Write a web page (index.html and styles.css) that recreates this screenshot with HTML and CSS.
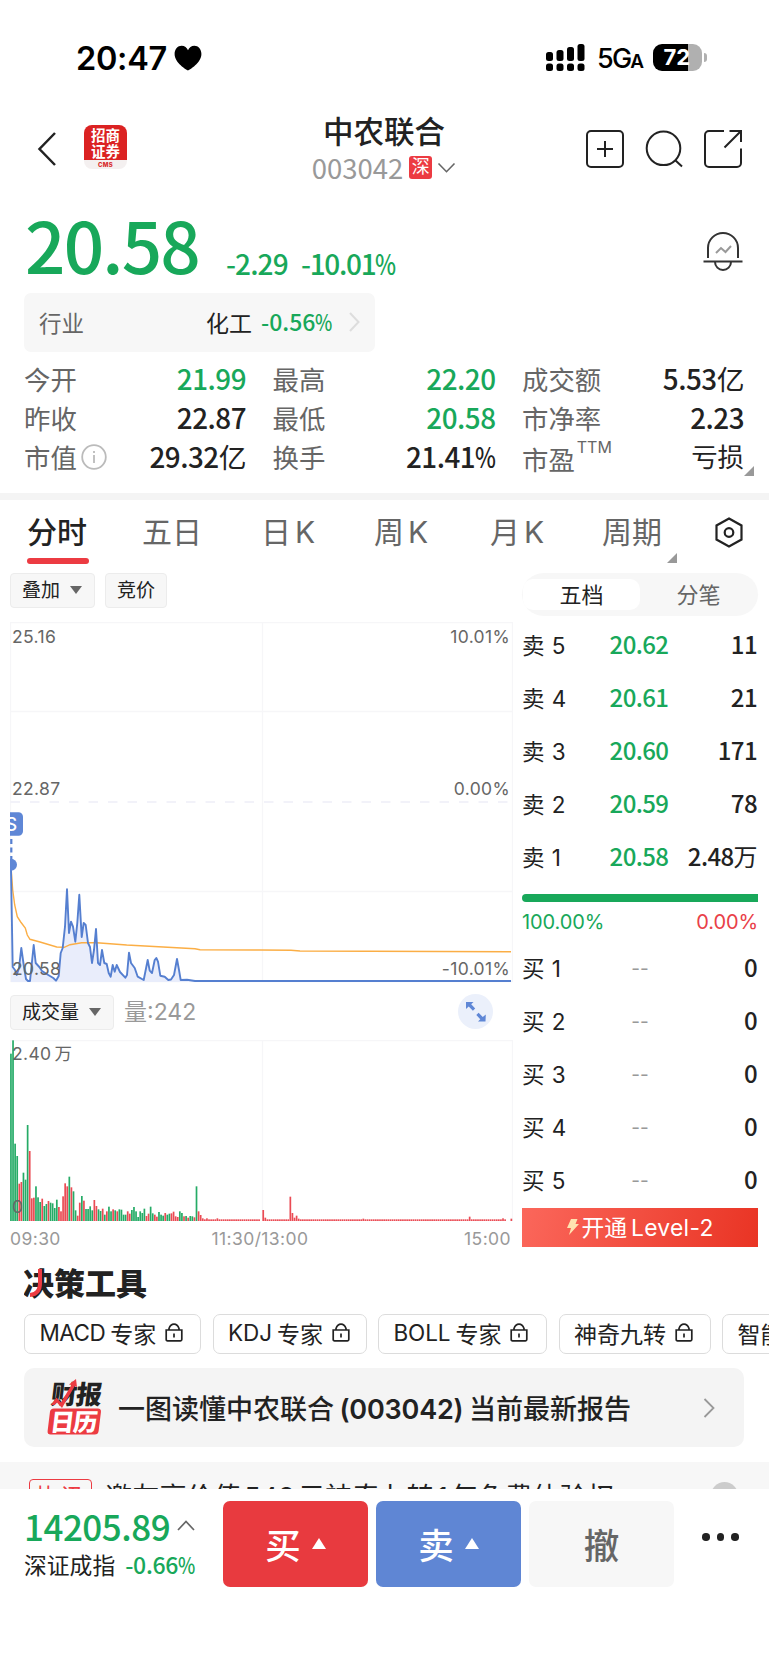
FILE: index.html
```html
<!DOCTYPE html>
<html lang="zh-CN">
<head>
<meta charset="utf-8">
<title>中农联合 003042</title>
<link rel="stylesheet" href="styles.css">
</head>
<body>
<div class="app">
  <div class="status">
    <span class="clock">20:47</span>
    <svg class="heart" width="28" height="26" viewBox="0 0 28 26"><path d="M14 25.5C12.5 24.8 .6 18 .6 9 .6 4.300 3.800.800 7.600.800 10.600.800 13 2.800 14 5.300 15 2.800 17.400.800 20.400.800 24.200.800 27.400 4.300 27.400 9 27.400 18 15.500 24.800 14 25.500Z"/></svg>
    <svg class="signal" width="39" height="28" viewBox="0 0 39 28"><rect x="0" y="8" width="7" height="9" rx="2.500"/><rect x="10.500" y="6" width="7" height="11" rx="2.500"/><rect x="21" y="3" width="7" height="14" rx="2.500"/><rect x="31.500" y="0" width="7" height="17" rx="2.500"/><rect x="0" y="19.500" width="7" height="7.500" rx="2.500"/><rect x="10.500" y="19.500" width="7" height="7.500" rx="2.500"/><rect x="21" y="19.500" width="7" height="7.500" rx="2.500"/><rect x="31.500" y="19.500" width="7" height="7.500" rx="2.500"/></svg>
    <span class="net">5G<small>A</small></span>
    <span class="battery">72</span><span class="battery-tip"></span>
  </div>

  <div class="nav">
    <svg class="back" width="20" height="36" viewBox="0 0 20 36"><path d="M18 2 2.500 18 18 34"/></svg>
    <div class="broker"><span>招商</span><span>证券</span><em>CMS</em></div>
    <div class="name">
      <div class="title">中农联合</div>
      <div class="code"><span class="num">003042</span><b>深</b><svg width="19" height="12" viewBox="0 0 19 12"><path d="M1.500 1.500 9.500 9.700 17.500 1.500"/></svg></div>
    </div>
    <div class="actions">
      <svg width="38" height="38" viewBox="0 0 38 38"><rect x="1" y="1" width="36" height="36" rx="4"/><path d="M19 11v16M11 19h16"/></svg>
      <svg width="38" height="38" viewBox="0 0 38 38"><circle cx="18.500" cy="18.300" r="16.800"/><path d="m30 30 7 6.500"/></svg>
      <svg width="38" height="38" viewBox="0 0 38 38"><path d="M20 1H5a4 4 0 0 0-4 4v28a4 4 0 0 0 4 4h28a4 4 0 0 0 4-4V18.500M25.500 1H37v11M37 1 20.500 17.500"/></svg>
    </div>
  </div>

  <div class="quote">
    <span class="price num">20.58</span>
    <span class="chg num">-2.29</span>
    <span class="chg pct num">-10.01<small>%</small></span>
    <svg class="bell" width="40" height="42" viewBox="0 0 40 42"><path d="M5 27V17a15 15 0 0 1 30 0v10M.500 30.500h39M12 31a8 8 0 0 0 16 0"/><path class="zig" d="m13 22 5-5 4.500 4 5.500-6"/></svg>
  </div>
  <div class="industry">
    <span class="gray">行业</span><span class="ind-name">化工</span><span class="num ind-pct">-0.56<small>%</small></span>
    <svg width="11" height="20" viewBox="0 0 11 20"><path d="m1 1 8.500 9L1 19"/></svg>
  </div>
  <div class="stats">
    <div><label>今开</label><i class="num g">21.99</i></div><div><label>最高</label><i class="num g">22.20</i></div><div><label>成交额</label><i class="num">5.53<u>亿</u></i></div>
    <div><label>昨收</label><i class="num">22.87</i></div><div><label>最低</label><i class="num g">20.58</i></div><div><label>市净率</label><i class="num">2.23</i></div>
    <div><label>市值</label><svg class="info" width="26" height="26" viewBox="0 0 26 26"><circle cx="13" cy="13" r="11.800"/><path d="M13 11v8M13 7v2"/></svg><i class="num">29.32<u>亿</u></i></div><div><label>换手</label><i class="num">21.41<small>%</small></i></div><div class="last"><label class="low">市盈</label><sup>TTM</sup><i class="zh">亏损</i></div>
  </div>
  <div class="band"></div>

  <div class="tabs">
    <span class="on">分时</span><span>五日</span><span>日<u>K</u></span><span>周<u>K</u></span><span>月<u>K</u></span><span class="more">周期</span>
    <svg width="28" height="31" viewBox="0 0 28 31"><path d="M14 1.500 26.500 8.500v14L14 29.500 1.500 22.500v-14Z"/><circle cx="14" cy="15.500" r="4.300"/></svg>
  </div>

  <div class="main">
    <div class="left">
      <div class="tools"><span class="btn">叠加<s></s></span><span class="btn">竞价</span></div>
      <div class="chart price-chart">
        <svg width="503" height="361" viewBox="10 622 503 361">
          <path class="grid" d="M10.500 982V622.500H512.500V982M10.500 711.500h502M10.500 891.500h502M262.500 622.500V982M10.500 981.500h502"/>
          <path class="mid" d="M10.500 802h502"/>
          <path class="area" d=""/>
          <path class="avg" d="M11.300 871 12.700 890 14.700 905 17.300 916.700 20.700 922 25.300 928 27.300 935 30 939.300 40 942 56.700 947 64.300 947.300 70 944.700 81.700 942.700 96.700 942.700 126.700 945 195 948.700 200 949.700 260 950 291 950.300 300 951 511 951.700"/>
          <path class="line" d=""/>
          <path class="buy-dash" d="M11.300 839v28"/>
          <circle class="dot" cx="11" cy="864.800" r="6"/>
          <path class="flag" d="M10 812.300h8.500a4.500 4.500 0 0 1 4.500 4.500v14.500a4.500 4.500 0 0 1-4.500 4.500H10Z"/>
          <text class="flag-s" x="5.500" y="831">S</text>
        </svg>
        <span class="tl">25.16</span><span class="tr">10.01%</span><span class="ml">22.87</span><span class="mr">0.00%</span><span class="bl">20.58</span><span class="br">-10.01%</span>
      </div>
      <div class="tools vol"><span class="btn">成交量<s></s></span><span class="volume">量:242</span>
        <svg class="expand" width="35" height="35" viewBox="0 0 35 35"><circle cx="17.500" cy="17.500" r="17.500"/><path d="M8 8h7.500l-2.300 2.300 4 4.100-2.300 2.300-4.200-4.100L8 15ZM27.500 27.500H20l2.300-2.300-4-4.100 2.300-2.300 4.200 4.100 3-2.500Z"/></svg>
      </div>
      <div class="chart vol-chart">
        <svg width="503" height="181" viewBox="10 1040 503 181"><path class="grid" d="M10.500 1221V1040.500H512.500V1221M262.500 1040.500V1221"/><g class="bars"></g></svg>
        <span class="tl">2.40<q>万</q></span><span class="zero">0</span>
      </div>
      <div class="axis"><span>09:30</span><span>11:30/13:00</span><span>15:00</span></div>
    </div>

    <div class="book">
      <div class="seg"><span class="on">五档</span><span>分笔</span></div>
      <div class="rows">
        <div><span>卖 5</span><b>20.62</b><em>11</em></div>
        <div><span>卖 4</span><b>20.61</b><em>21</em></div>
        <div><span>卖 3</span><b>20.60</b><em>171</em></div>
        <div><span>卖 2</span><b>20.59</b><em>78</em></div>
        <div><span>卖 1</span><b>20.58</b><em>2.48<u>万</u></em></div>
      </div>
      <div class="ratio"></div>
      <div class="ratio-text"><span class="g">100.00%</span><span class="r">0.00%</span></div>
      <div class="rows">
        <div><span>买 1</span><i>--</i><em>0</em></div>
        <div><span>买 2</span><i>--</i><em>0</em></div>
        <div><span>买 3</span><i>--</i><em>0</em></div>
        <div><span>买 4</span><i>--</i><em>0</em></div>
        <div><span>买 5</span><i>--</i><em>0</em></div>
      </div>
      <div class="level"><svg width="14" height="18" viewBox="0 0 14 18"><path d="M5 1h6.500L9.500 6H13L3 17l2-7H1Z"/></svg><span>开通<q>Level-2</q></span></div>
    </div>
  </div>

  <div class="heading"><svg width="130" height="40" viewBox="0 0 130 40"><text class="h-text" x="-1" y="31.500" textLength="124">决策工具</text><path class="h-mark" d="M14 6h4v14c0 8-3.500 13.300-12 14v-4c5.500-.700 8-4 8-10.200Z"/></svg></div>
  <div class="chips">
    <span class="c1"><q>MACD</q>专家<svg viewBox="0 0 18 19"><path d="M1.200 7h15.600v9.500q0 1.300-1.300 1.300H2.500q-1.300 0-1.300-1.300ZM4 7V5.500Q5.500 1.200 9 1.200T14 5.500V7M9 10.500v4"/></svg></span>
    <span class="c2"><q>KDJ</q>专家<svg viewBox="0 0 18 19"><path d="M1.200 7h15.600v9.500q0 1.300-1.300 1.300H2.500q-1.300 0-1.300-1.300ZM4 7V5.500Q5.500 1.200 9 1.200T14 5.500V7M9 10.500v4"/></svg></span>
    <span class="c3"><q>BOLL</q>专家<svg viewBox="0 0 18 19"><path d="M1.200 7h15.600v9.500q0 1.300-1.300 1.300H2.500q-1.300 0-1.300-1.300ZM4 7V5.500Q5.500 1.200 9 1.200T14 5.500V7M9 10.500v4"/></svg></span>
    <span class="c4">神奇九转<svg viewBox="0 0 18 19"><path d="M1.200 7h15.600v9.500q0 1.300-1.300 1.300H2.500q-1.300 0-1.300-1.300ZM4 7V5.500Q5.500 1.200 9 1.200T14 5.500V7M9 10.500v4"/></svg></span>
    <span class="c5">智能</span>
  </div>
  <div class="report">
    <svg class="rlogo" width="58" height="58" viewBox="0 0 58 58"><g transform="skewX(-7)"><text class="rl-a" x="6" y="24.500" textLength="51">财报</text><rect x="7" y="29.500" width="51" height="26" rx="3.500"/><text class="rl-b" x="9" y="52" textLength="47">日历</text></g><path d="m4 26 5.500-7.500 4.500 5L24.500 6 22 5.500 29 0l1 8-2.300-.700L15 29l-5-5.500L7.500 26Z"/></svg>
    <span>一图读懂中农联合<q>(003042)</q>当前最新报告</span>
    <svg class="rarrow" width="12" height="20" viewBox="0 0 12 20"><path d="m1.500 1 9 9-9 9"/></svg>
  </div>
  <div class="ticker"><b>热讯</b><span>邀友享价值<q>548</q>元神奇九转<q>1</q>年免费体验权</span><i></i></div>

  <div class="bottom">
    <div class="index">
      <div class="ix-top"><span class="num">14205.89</span><svg width="18" height="11" viewBox="0 0 18 11"><path d="m1 10 8-8.500L17 10"/></svg></div>
      <div class="ix-sub"><span>深证成指</span><span class="num g">-0.66<small>%</small></span></div>
    </div>
    <div class="trade buy">买<s></s></div>
    <div class="trade sell">卖<s></s></div>
    <div class="trade undo">撤</div>
    <div class="dots"><i></i><i></i><i></i></div>
  </div>
</div>
<script src="chart.js"></script>
</body>
</html>
```
FILE: styles.css
```css
* { box-sizing: border-box; }
body { margin: 0; background: #fff; color: #222; font-family: Inter, "Noto Sans CJK SC", sans-serif; font-size: 22px; }
svg { display: block; flex: none; fill: none; }
i, em { font-style: normal; }
s, u { text-decoration: none; }
q { quotes: none; }
.app { width: 769px; height: 1665px; overflow: hidden; display: flex; flex-direction: column; }
.app > div { flex: none; white-space: nowrap; }
.num { font-family: "Noto Sans CJK SC", sans-serif; font-weight: 500; }
.num small { display: inline-block; font-size: 1em; transform: scaleX(.8); transform-origin: left; margin-right: -.19em; }
.num u, .rows em u { font-weight: 400; }
.g { color: #18a85a; }
.r { color: #e94048; }

.status { height: 115px; padding: 0 62px 0 76px; display: flex; align-items: center; color: #000; }
.clock { font-size: 32.500px; font-weight: 600; width: 99px; letter-spacing: -.3px; padding-top: 1px; }
.heart { fill: #000; }
.signal { margin-left: 344px; fill: #000; }
.net { font-size: 27px; font-weight: 500; margin-left: 12px; width: 57px; letter-spacing: -1.800px; position: relative; top: 1px; }
.net small { font-size: 19px; font-weight: 600; }
.battery { width: 49px; height: 27px; border-radius: 9px; background: linear-gradient(90deg, #000 72%, #b0b0b0 72%); color: #fff; font-size: 22px; font-weight: 700; line-height: 27px; text-align: center; padding-right: 2px; }
.battery-tip { width: 3px; height: 9px; margin-left: 2px; border-radius: 0 3px 3px 0; background: #b0b0b0; }

.nav { height: 75px; padding: 0 27px 0 37px; display: flex; }
.back { margin-top: 15.500px; stroke: #222; stroke-width: 2.500; }
.broker { margin: 10px 0 0 27px; width: 43px; height: 44px; border-radius: 8px; background: linear-gradient(#db2222 0 35px, #f4f0f0 35px); color: #fff; font: 700 14.500px/16px "Noto Sans CJK SC", sans-serif; display: flex; flex-direction: column; align-items: center; padding-top: 2px; }
.broker em { color: #d82b2b; font: 800 6px/8px Inter, sans-serif; margin-top: 2px; letter-spacing: .3px; }
.name { margin-left: 171px; width: 172px; height: 75px; display: flex; flex-direction: column; align-items: center; }
.title { font-size: 30.500px; line-height: 34px; font-weight: 500; }
.code { display: flex; align-items: center; height: 38px; color: #999; }
.code .num { font-size: 27.500px; line-height: 34px; font-weight: 400; padding-bottom: 3px; }
.code b { width: 23px; height: 23px; margin: -1px 5px 0 6px; border-radius: 3px; background: #ec3b42; color: #fff; font-weight: 400; font-size: 18px; line-height: 22px; text-align: center; }
.code svg { stroke: #666; stroke-width: 1.600; }
.actions { margin: 14.500px 0 0 116px; display: flex; gap: 21px; }
.actions svg { stroke: #222; stroke-width: 2; }

.quote { height: 103px; padding: 0 0 0 25px; display: flex; align-items: flex-start; color: #18a85a; }
.price { font-size: 71px; line-height: 104px; width: 201px; letter-spacing: -1.800px; margin-top: 1px; }
.chg { font-size: 28px; line-height: 40px; margin-top: 53px; width: 75px; letter-spacing: -.900px; }
.chg.pct { width: 402px; letter-spacing: -1.300px; }
.bell { margin-top: 40.500px; stroke: #333; stroke-width: 2; }
.bell .zig { stroke: #999; }

.industry { margin-left: 24px; width: 351px; height: 59px; padding: 0 15px 2px; background: #f7f7f7; border-radius: 7px; display: flex; align-items: center; }
.gray { color: #666; font-size: 22.500px; width: 167px; }
.ind-name { font-size: 23px; width: 55px; }
.ind-pct { color: #18a85a; font-size: 23px; line-height: 50px; width: 88px; padding-bottom: 1px; }
.industry svg { stroke: #ddd; stroke-width: 2; }

.stats { padding: 7px 25px 0 24px; height: 141px; display: grid; grid-template-columns: 222px 223px 222px; column-gap: 26.500px; grid-auto-rows: 39px; }
.stats > div { display: flex; align-items: center; position: relative; }
.stats label { font-size: 26.400px; color: #666; }
.stats i { margin-left: auto; font-size: 27.800px; line-height: 36px; padding-bottom: 2px; letter-spacing: -.500px; }
.stats .zh { font-size: 26.400px; letter-spacing: 0; padding: 0; }
.stats .low { position: relative; top: 2px; }
.stats sup { font-size: 16px; color: #666; align-self: flex-start; margin: 0 0 0 2px; line-height: 20px; }
.info { margin-left: 4px; stroke: #bbb; stroke-width: 1.800; }
.last::after { content: ""; position: absolute; right: -10px; bottom: 0; border: 5px solid; border-color: transparent #999 #999 transparent; }
.band { height: 7px; background: #f4f4f4; }

.tabs { height: 73px; padding: 0 0 0 27px; display: flex; align-items: flex-start; color: #666; font-size: 30px; line-height: 64px; }
.tabs span { position: relative; width: 115px; }
.tabs span:nth-child(2) { width: 119px; }
.tabs span:nth-child(3) { width: 113px; }
.tabs span:nth-child(4) { width: 116px; }
.tabs span:nth-child(5) { width: 112px; }
.tabs u { margin-left: 4px; }
.tabs .on { color: #222; font-weight: 500; }
.tabs .on::after { content: ""; position: absolute; left: 0; top: 57.500px; width: 62px; height: 6px; border-radius: 3px; background: #ec3b42; }
.tabs .more::after { content: ""; position: absolute; left: 65px; top: 53px; border: 5px solid; border-color: transparent #999 #999 transparent; }
.tabs svg { margin-top: 17px; stroke: #222; stroke-width: 2.200; margin-left: -2px; }

.main { height: 675px; display: flex; padding-left: 10px; }
.left { width: 503px; }
.tools { height: 49px; display: flex; gap: 10px; align-items: flex-start; }
.btn { height: 34.500px; border: 1px solid #ececec; border-radius: 4px; background: #f7f7f7; padding: 0 11px; font-size: 19px; line-height: 33px; display: flex; align-items: center; }
.btn s { margin: 0 1px 0 10px; border: 6px solid transparent; border-top: 8px solid #666; border-bottom: 0; }
.chart { position: relative; font-size: 17.500px; line-height: 20px; color: #666; letter-spacing: .35px; }
.chart span { position: absolute; }
.tl { left: 2px; top: 4px; }
.price-chart .tl, .tr { top: 4.500px; }
.tr { right: 3px; }
.ml { left: 2px; top: 157px; }
.mr { right: 3px; top: 157px; }
.bl { left: 2px; top: 337px; }
.br { right: 3px; top: 337px; }
.zero { left: 2px; bottom: 4px; }
.tl q { margin-left: 3px; }
.grid { stroke: #f6f6f8; stroke-width: 1.300; }
.mid { stroke: #eeeef8; stroke-width: 1.700; stroke-dasharray: 9.500 10; }
.area { fill: #e9edfb; }
.line { stroke: #557fd0; stroke-width: 1.900; stroke-linejoin: round; }
.avg { stroke: #fbae45; stroke-width: 1.400; }
.buy-dash { stroke: #557fd0; stroke-width: 2.200; stroke-dasharray: 5 3.500; }
.dot, .flag { fill: #5f87d6; }
.flag-s { fill: #fff; font-size: 18px; font-weight: 500; }
.tools.vol { height: 57px; padding-top: 12px; }
.volume { color: #999; font-size: 23px; line-height: 34px; font-weight: 400; }
.expand { margin: -1px 20px 0 auto; }
.expand circle { fill: #ebf0fb; }
.expand path { fill: #5f87d6; }
.axis { display: flex; justify-content: space-between; padding: 8px 2px 0 0; font-size: 17.500px; line-height: 20px; color: #999; letter-spacing: .4px; }
.axis span:nth-child(2) { margin-right: 5px; }

.book { width: 236px; margin-left: 9px; }
.seg { height: 43px; border-radius: 22px; background: #f7f7f7; display: flex; padding: 6px 1px; font-size: 22px; line-height: 32px; color: #666; text-align: center; }
.seg span { width: 117px; height: 31px; }
.seg .on { background: #fff; color: #222; border-radius: 10px; }
.rows > div { height: 53px; display: flex; align-items: center; line-height: 53px; }
.rows span { width: 77px; font-size: 22.500px; word-spacing: 1px; padding-top: 1px; }
.rows b, .rows em { font: 500 24px/48px "Noto Sans CJK SC", sans-serif; letter-spacing: -.600px; padding-bottom: 2px; }
.rows b { color: #18a85a; width: 68px; text-align: center; margin-left: 6px; }
.rows i { width: 68px; margin-left: 7px; text-align: center; color: #999; font-size: 19px; padding-top: 1px; }
.rows em { margin-left: auto; margin-right: 1px; }
.seg + .rows { padding-top: 2px; }
.ratio { height: 8px; margin-top: 11px; border-radius: 4px 0 0 4px; background: #18a85a; }
.ratio-text { display: flex; justify-content: space-between; font-size: 20px; line-height: 40px; height: 39px; letter-spacing: -.1px; }
.level { height: 39px; margin-top: 2px; padding-bottom: 2px; background: linear-gradient(105deg, #fb675b, #e93424); color: #fff; display: flex; align-items: center; justify-content: center; gap: 1px; font-size: 22.800px; }
.level svg { fill: #ffe3b0; }
.level q { margin-left: 4px; letter-spacing: .3px; }

.heading { height: 66px; padding: 15px 0 0 24px; }
.h-text { fill: #222; font: 900 31px "Noto Sans CJK SC", sans-serif; }
.h-mark { fill: #ec3b42; }
.chips { height: 40px; padding-left: 24px; display: flex; gap: 11.500px; overflow: hidden; }
.chips span { flex: none; height: 39.500px; border: 1.500px solid #dcdcdc; border-radius: 7px; font-size: 23px; display: flex; align-items: center; padding: 0 0 2px 14.500px; }
.chips q { margin-right: 5px; font-size: 22.500px; letter-spacing: -.1px; }
.chips .c1 q { letter-spacing: -.5px; margin-right: 5px; }
.chips svg { width: 18px; height: 19px; margin-left: 9px; stroke: #222; stroke-width: 1.700; }
.c1 { width: 177px; } .c2 { width: 154px; } .c3 { width: 169px; } .c4 { width: 152px; } .c5 { width: 152px; }
.report { margin: 14px 25px 15px 24px; height: 79px; border-radius: 10px; background: #f4f4f4; display: flex; align-items: center; font-size: 27px; font-weight: 500; padding-left: 23px; }
.report span { margin-left: 13px; }
.report q { margin: 0 5.500px; font-weight: 600; letter-spacing: -.2px; }
.rlogo .rl-a { fill: #222; font: 900 26px "Noto Sans CJK SC", sans-serif; }
.rlogo .rl-b { fill: #fff; font: 900 24px "Noto Sans CJK SC", sans-serif; }
.rlogo rect, .rlogo path { fill: #ec3b42; }
.rarrow { margin-left: auto; margin-right: 29px; stroke: #999; stroke-width: 1.800; }
.ticker { height: 27px; overflow: hidden; background: #f7f7f7; display: flex; align-items: flex-start; padding: 17px 0 0 29px; }
.ticker b { width: 63px; height: 34px; border: 1.500px solid #ec3b42; border-radius: 4px; color: #ec3b42; font-size: 23px; font-weight: 400; line-height: 34px; text-align: center; letter-spacing: 3px; }
.ticker span { margin-left: 13px; font-size: 27.200px; line-height: 37px; width: 509px; }
.ticker q { margin: 0 3px; }
.ticker i { width: 27px; height: 27px; margin: 3px 0 0 97px; border-radius: 50%; background: #ccc; }

.bottom { height: 176px; background: #fff; padding: 11.500px 0 0 24px; display: flex; gap: 8px; }
.index { width: 191px; color: #18a85a; }
.ix-top { display: flex; align-items: center; height: 52px; }
.ix-top .num { font-size: 35px; line-height: 46px; padding-bottom: 2px; width: 153px; letter-spacing: -.5px; }
.ix-top svg { stroke: #666; stroke-width: 1.700; margin-top: -2px; }
.ix-sub { display: flex; line-height: 25px; font-size: 22.800px; color: #222; }
.ix-sub .num { margin-left: 10px; font-size: 23px; line-height: 22px; letter-spacing: -.3px; }
.trade { width: 145px; height: 86px; border-radius: 7px; color: #fff; font-size: 35.500px; font-weight: 500; display: flex; align-items: center; justify-content: center; gap: 11px; padding-bottom: 1px; }
.trade s { border: 7px solid transparent; border-bottom: 11px solid #fff; border-top: 0; }
.buy { background: #e83a3f; }
.sell { background: #5f86d4; }
.undo { background: #f7f7f7; color: #666; }
.dots { display: flex; gap: 7px; margin: 32.500px 0 0 20px; }
.dots i { width: 7.500px; height: 7.500px; border-radius: 50%; background: #222; }
```
FILE: chart.js
```js
// Intraday price path: x,y pairs in chart coordinates
const pts = [[11,870],[12.7,967],[15,970],[16.7,975],[19,968],[21.3,948],[24,967],[26,979],[28,981],[30,981],[33.7,945],[35.7,963],[39.3,967],[42,971],[48.3,975],[53.3,978],[56,980.7],[58.7,976],[60.7,953],[62.7,948],[65,926.7],[67,889.3],[69,933],[71,921.7],[73,926.7],[75.3,941.7],[77.3,923],[79.3,894.7],[81.7,937],[83.7,923],[85.7,925],[88,943],[90,947],[92,963],[94,950],[96,929],[98,963],[100,965],[102,950],[104.3,963],[106.7,964],[108.7,973],[110.7,976.7],[112.7,965],[114.7,971.7],[116.7,965],[120,972],[125.3,977.7],[127,975],[129,952.7],[131,963],[134.7,968],[137.7,976.7],[143.7,980],[147.7,960],[149.7,970.7],[152,973],[154.7,960],[156.3,958],[158,961.7],[160.3,975.7],[164.7,976.7],[168.3,980],[171,979.5],[174,975],[177,959],[179,970],[180.7,980],[187,979.7],[195,981],[511,981]];
const d = 'M' + pts.map(p => p.join(' ')).join('L');
document.querySelector('.line').setAttribute('d', d);
document.querySelector('.area').setAttribute('d', d + 'V982H11Z');

// Per-minute volume: colour letter followed by height
const data = 'g502 g542 g232 g195 r112 r117 g145 g124 g288 r210 r68 r70 g104 g71 g57 r67 g45 g51 r60 g55 g53 g39 g64 r42 r29 r74 r113 r104 g133 r101 g89 g32 r16 r55 g75 r61 g36 g36 g44 g32 r63 r45 g35 g30 r37 g19 r29 g43 g29 r35 g32 r29 g35 g34 g19 g19 r29 r22 g33 g42 g29 g12 g29 g24 g37 r15 r22 g43 g23 r19 r13 g27 g19 g16 r24 g19 g22 r23 r28 r14 r12 g29 g24 r14 g15 r10 g15 g14 r11 g104 r29 r18 r8 r5 r8'.split(' ');
const extra = {99: 8, 120: 0, 121: 33, 122: 10, 134: 73, 135: 24, 136: 10, 137: 16, 138: 7, 169: 7, 220: 13, 236: 8, 238: 0, 239: 0, 240: 7};
let out = '';
for (let i = 0; i < 241; i++) {
  const c = data[i] ? data[i][0] : 'r';
  const h = (data[i] ? +data[i].slice(1) : extra[i] ?? 5) / 3;
  out += `<rect x="${(10.1 + i * 2.085).toFixed(2)}" y="${(1221 - h).toFixed(2)}" width="1.7" height="${h.toFixed(2)}" fill="${c === 'g' ? '#25ab66' : '#ea4b54'}"/>`;
}
document.querySelector('.bars').innerHTML = out;
```
